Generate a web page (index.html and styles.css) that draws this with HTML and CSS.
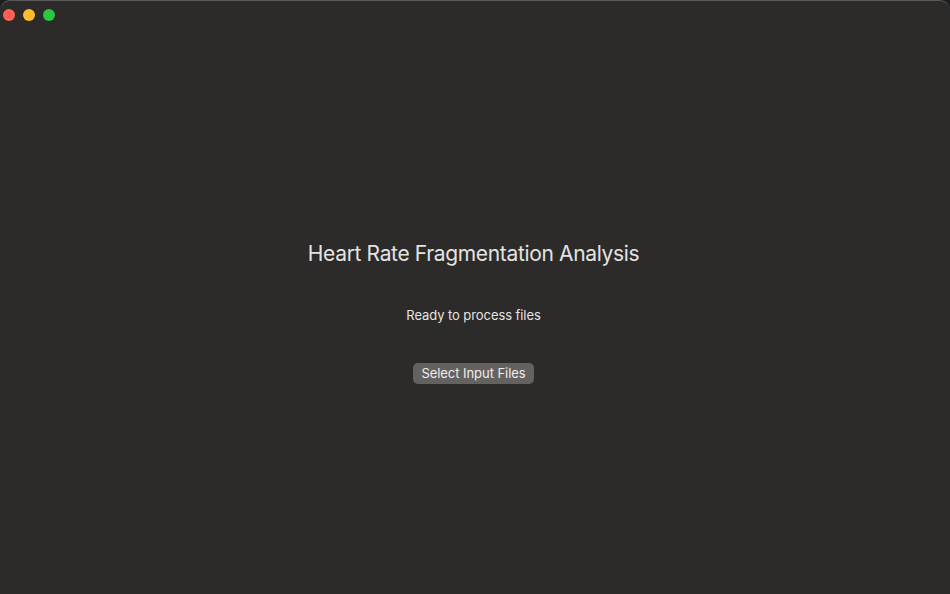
FILE: index.html
```html
<!DOCTYPE html>
<html>
<head>
<meta charset="utf-8">
<link rel="stylesheet" href="styles.css">
</head>
<body>
<div class="window">
  <div class="titlebar">
    <span class="light red"></span>
    <span class="light yellow"></span>
    <span class="light green"></span>
  </div>
  <main class="content">
    <h1 class="title">Heart Rate Fragmentation Analysis</h1>
    <p class="status">Ready to process files</p>
    <button class="btn">Select Input Files</button>
  </main>
</div>
</body>
</html>
```
FILE: styles.css
```css
html, body {
  margin: 0;
  padding: 0;
  width: 950px;
  height: 594px;
  background: #1e1e1e;
  overflow: hidden;
}
.window {
  width: 950px;
  height: 594px;
  box-sizing: border-box;
  background: #2c2b2a;
  border-top: 1px solid #5a5958;
  border-radius: 10px 10px 0 0;
  display: flex;
  flex-direction: column;
  font-family: Inter, "Noto Sans", sans-serif;
  color: #e6e5e4;
}
.titlebar {
  height: 27px;
  display: flex;
  align-items: center;
  gap: 8px;
  padding-left: 3px;
}
.light {
  width: 12px;
  height: 12px;
  border-radius: 50%;
  display: block;
}
.red { background: #fe5f57; }
.yellow { background: #febc2e; }
.green { background: #28c840; }
.content {
  display: flex;
  flex-direction: column;
  align-items: center;
  padding-top: 213px;
  padding-right: 3px;
}
.title {
  margin: 0;
  font-size: 21px;
  font-weight: 400;
  line-height: 26px;
  letter-spacing: -0.35px;
  color: #e4e3e2;
}
.status {
  margin: 40px 0 0 0;
  font-size: 13px;
  line-height: 16px;
  letter-spacing: -0.08px;
  color: #e4e3e2;
}
.btn {
  margin-top: 40px;
  height: 21px;
  padding: 0 8px;
  border: none;
  border-radius: 5px;
  background: #636261;
  color: #eeedec;
  font-family: Inter, "Noto Sans", sans-serif;
  font-size: 13px;
  line-height: 21px;
  letter-spacing: -0.05px;
}
```
